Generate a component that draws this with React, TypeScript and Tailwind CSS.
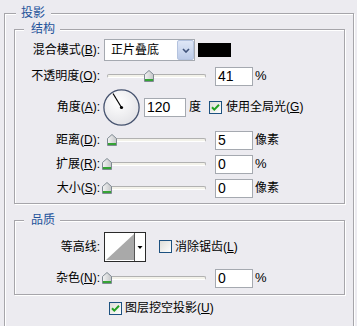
import React from 'react'

const BG = 'bg-[#ecebf0]'

function Key({ k }: { k: string }) {
  return (
    <>
      (<span className="underline underline-offset-[1px]">{k}</span>)
    </>
  )
}

function Label({ text, k }: { text: string; k?: string }) {
  return (
    <span className="w-[85px] shrink-0 whitespace-nowrap text-right">
      {text}
      {k && <Key k={k} />}:
    </span>
  )
}

function NumBox({ value, className = 'w-[38px]' }: { value: string; className?: string }) {
  return (
    <div
      className={`h-[19px] shrink-0 border border-[#a5a9b0] bg-white pl-[2px] text-[14px] leading-[17px] ${className}`}
    >
      {value}
    </div>
  )
}

function Thumb() {
  return (
    <svg width="10" height="12" viewBox="0 0 10 12">
      <defs>
        <linearGradient id="tg" x1="0" y1="0" x2="1" y2="0">
          <stop offset="0" stopColor="#f4f4f4" />
          <stop offset="1" stopColor="#c4c6c8" />
        </linearGradient>
      </defs>
      <path d="M0.5 4.5 L5 0.5 L9.5 4.5 V11.5 H0.5 Z" fill="url(#tg)" stroke="#7f8a92" />
      <rect x="1" y="9" width="8" height="2" fill="#35a335" />
    </svg>
  )
}

function Slider({ offset }: { offset: number }) {
  return (
    <div className="relative ml-[2px] h-[12px] w-[110px] shrink-0">
      <div className="absolute left-[5px] right-[6px] top-[4px] h-[4px] rounded-full border border-[#b1b1b1] border-b-white bg-[#f3f2ea]" />
      <div className="absolute top-0" style={{ left: offset }}>
        <Thumb />
      </div>
    </div>
  )
}

function Check({ checked }: { checked: boolean }) {
  return (
    <svg width="13" height="13" viewBox="0 0 13 13" className="shrink-0">
      <defs>
        <linearGradient id="cg" x1="0" y1="0" x2="1" y2="1">
          <stop offset="0" stopColor="#dcdcd6" />
          <stop offset="1" stopColor="#ffffff" />
        </linearGradient>
      </defs>
      <rect x="0.5" y="0.5" width="12" height="12" fill="url(#cg)" stroke="#1c5180" />
      {checked && (
        <path d="M3 6.2 L5.3 8.6 L10 3.8" fill="none" stroke="#21a121" strokeWidth="2" />
      )}
    </svg>
  )
}

function Dial() {
  return (
    <svg width="37" height="37" viewBox="0 0 37 37" className="ml-[3px] shrink-0">
      <defs>
        <radialGradient id="dg" cx="0.4" cy="0.35" r="0.7">
          <stop offset="0" stopColor="#ffffff" />
          <stop offset="1" stopColor="#e2e2e6" />
        </radialGradient>
      </defs>
      <circle cx="18.5" cy="18.5" r="17.6" fill="url(#dg)" stroke="#46536f" strokeWidth="1.3" />
      <line x1="18.5" y1="18.5" x2="10" y2="4.5" stroke="#000" strokeWidth="1.2" />
      <circle cx="18.5" cy="18.5" r="1.6" fill="#000" />
    </svg>
  )
}

function Contour() {
  return (
    <svg width="42" height="30" viewBox="0 0 42 30" className="ml-[4px] shrink-0">
      <rect x="0.5" y="0.5" width="41" height="29" fill="#fff" stroke="#2a2a2a" />
      <polygon points="2,28 30,2 30,28" fill="#a9a9a9" />
      <line x1="30.5" y1="1" x2="30.5" y2="29" stroke="#555" />
      <polygon points="33.5,14 38.5,14 36,17" fill="#000" />
    </svg>
  )
}

const fieldset = 'border border-[#a6a5aa] shadow-[1px_1px_0_#fff,inset_1px_1px_0_#fff]'
const legend = `${BG} text-[#23529a] leading-[16px]`

export default function App() {
  return (
    <div
      className={`h-[326px] w-[357px] overflow-hidden ${BG} pl-[4px] pt-[5px] font-['Liberation_Sans','Noto_Sans_CJK_SC',sans-serif] text-[12px] leading-[16px] text-black`}
    >
      <fieldset className={`h-[345px] w-[350px] ${fieldset}`}>
        <legend className={`ml-[11px] pl-[5px] pr-[6px] ${legend}`}>投影</legend>

        {/* 结构 */}
        <fieldset className={`ml-[9px] mr-[8px] pb-[3px] pt-[2px] ${fieldset}`}>
          <legend className={`ml-[9px] pl-[7px] pr-[5px] ${legend}`}>结构</legend>

          <div className="flex h-[22px] items-center">
            <Label text="混合模式" k="B" />
            <div className="ml-[4px] flex h-[22px] w-[91px] border border-[#a5a9b0] bg-white">
              <div className="flex-1 pl-[6px] leading-[20px]">正片叠底</div>
              <div className="flex w-[17px] items-center justify-center rounded-[2px] border border-[#b4c3df] bg-gradient-to-b from-[#dfe7f7] to-[#bccbe8]">
                <svg width="8" height="5" viewBox="0 0 8 5">
                  <path d="M1 1 L4 4 L7 1" fill="none" stroke="#3f527a" strokeWidth="1.6" />
                </svg>
              </div>
            </div>
            <div className="ml-[3px] h-[14px] w-[33px] bg-black" />
          </div>

          <div className="mt-[3px] flex h-[24px] items-center">
            <Label text="不透明度" k="O" />
            <Slider offset={42} />
            <NumBox value="41" className="ml-[3px] w-[38px]" />
            <span className="ml-[2px] text-[13px]">%</span>
          </div>

          <div className="flex h-[38px] items-center">
            <Label text="角度" k="A" />
            <Dial />
            <NumBox value="120" className="ml-[4px] w-[42px]" />
            <span className="ml-[3px]">度</span>
            <span className="ml-[8px] flex items-center">
              <Check checked />
            </span>
            <span className="ml-[4px]">
              使用全局光
              <Key k="G" />
            </span>
          </div>

          <div className="mt-[2px] flex h-[24px] items-center">
            <Label text="距离" k="D" />
            <Slider offset={5} />
            <NumBox value="5" className="ml-[3px] w-[38px]" />
            <span className="ml-[2px]">像素</span>
          </div>

          <div className="flex h-[24px] items-center">
            <Label text="扩展" k="R" />
            <Slider offset={0} />
            <NumBox value="0" className="ml-[3px] w-[38px]" />
            <span className="ml-[2px] text-[13px]">%</span>
          </div>

          <div className="flex h-[24px] items-center">
            <Label text="大小" k="S" />
            <Slider offset={0} />
            <NumBox value="0" className="ml-[3px] w-[38px]" />
            <span className="ml-[2px]">像素</span>
          </div>
        </fieldset>

        {/* 品质 */}
        <fieldset className={`ml-[9px] mr-[8px] mt-[8px] pb-[4px] ${fieldset}`}>
          <legend className={`ml-[9px] pl-[7px] pr-[5px] ${legend}`}>品质</legend>

          <div className="mt-[3px] flex h-[31px] items-center">
            <Label text="等高线" />
            <Contour />
            <span className="ml-[13px] flex items-center">
              <Check checked={false} />
            </span>
            <span className="ml-[3px]">
              消除锯齿
              <Key k="L" />
            </span>
          </div>

          <div className="mt-[4px] flex h-[24px] items-center">
            <Label text="杂色" k="N" />
            <Slider offset={0} />
            <NumBox value="0" className="ml-[3px] w-[38px]" />
            <span className="ml-[2px] text-[13px]">%</span>
          </div>
        </fieldset>

        <div className="mt-[5px] flex h-[16px] items-center pl-[104px]">
          <Check checked />
          <span className="ml-[3px]">
            图层挖空投影
            <Key k="U" />
          </span>
        </div>
      </fieldset>
    </div>
  )
}
